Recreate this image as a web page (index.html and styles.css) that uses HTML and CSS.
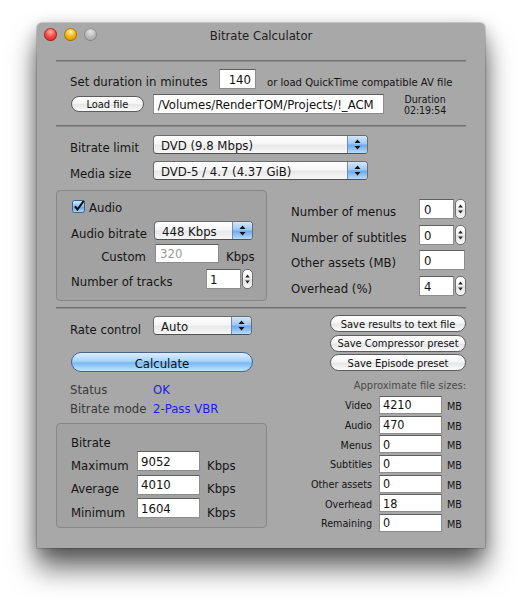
FILE: index.html
```html
<!DOCTYPE html>
<html>
<head>
<meta charset="utf-8">
<title>Bitrate Calculator</title>
<link rel="stylesheet" href="styles.css">
</head>
<body>
<div class="window">
  <div class="titlebar">
    <div class="lights"><span class="light red"></span><span class="light yellow"></span><span class="light gray"></span></div>
    <div class="title">Bitrate Calculator</div>
    <div></div>
  </div>
  <div class="content">
    <div class="sep sep1"></div>

    <div class="row r-dur">
      <span class="lbl lbl-dur">Set duration in minutes</span>
      <span class="field f-dur">140</span>
      <span class="small note">or load QuickTime compatible AV file</span>
    </div>
    <div class="row r-load">
      <span class="btn b-load">Load file</span>
      <span class="field f-path">/Volumes/RenderTOM/Projects/!_ACM</span>
      <span class="duration"><span class="small dline">Duration</span><span class="small dline">02:19:54</span></span>
    </div>

    <div class="sep sep2"></div>

    <div class="row r-limit">
      <span class="lbl lbl-col">Bitrate limit</span>
      <span class="popup p-wide"><span class="ptext">DVD (9.8 Mbps)</span><span class="parrows"><svg width="7" height="11" viewBox="0 0 7 11"><path d="M3.5 0.5 L6.5 4 H0.5Z M3.5 10.5 L6.5 7 H0.5Z"/></svg></span></span>
    </div>
    <div class="row r-media">
      <span class="lbl lbl-col">Media size</span>
      <span class="popup p-wide"><span class="ptext">DVD-5 / 4.7 (4.37 GiB)</span><span class="parrows"><svg width="7" height="11" viewBox="0 0 7 11"><path d="M3.5 0.5 L6.5 4 H0.5Z M3.5 10.5 L6.5 7 H0.5Z"/></svg></span></span>
    </div>

    <div class="middle">
      <div class="group audio">
        <div class="row a-check">
          <svg class="check" width="13" height="13" viewBox="0 0 13 13">
            <defs>
              <linearGradient id="cb" x1="0" y1="0" x2="0" y2="1">
                <stop offset="0" stop-color="#d5e9fb"/>
                <stop offset="0.5" stop-color="#8fc0f0"/>
                <stop offset="0.5" stop-color="#5f9fe6"/>
                <stop offset="1" stop-color="#b4dcfc"/>
              </linearGradient>
            </defs>
            <rect x="0.5" y="0.5" width="12" height="12" rx="2" fill="url(#cb)" stroke="#3d5f88"/>
            <path d="M3 6.2 L5.4 9.6 L11.8 0.8" fill="none" stroke="#111" stroke-width="2"/>
          </svg>
          <span class="lbl">Audio</span>
        </div>
        <div class="row a-bitrate">
          <span class="lbl lbl-col2">Audio bitrate</span>
          <span class="popup p-narrow"><span class="ptext">448 Kbps</span><span class="parrows"><svg width="7" height="11" viewBox="0 0 7 11"><path d="M3.5 0.5 L6.5 4 H0.5Z M3.5 10.5 L6.5 7 H0.5Z"/></svg></span></span>
        </div>
        <div class="row a-custom">
          <span class="lbl lbl-custom">Custom</span>
          <span class="field f-custom">320</span>
          <span class="lbl unit-kbps">Kbps</span>
        </div>
        <div class="row a-tracks">
          <span class="lbl lbl-tracks">Number of tracks</span>
          <span class="field f-step">1</span>
          <span class="stepper"><svg width="7" height="14" viewBox="0 0 7 14"><path d="M3.5 2.5 L5.8 5.5 H1.2Z M3.5 11.5 L5.8 8.5 H1.2Z"/></svg></span>
        </div>
      </div>

      <div class="assets">
        <div class="row s-row s1">
          <span class="lbl lbl-asset">Number of menus</span>
          <span class="field f-step">0</span>
          <span class="stepper"><svg width="7" height="14" viewBox="0 0 7 14"><path d="M3.5 2.5 L5.8 5.5 H1.2Z M3.5 11.5 L5.8 8.5 H1.2Z"/></svg></span>
        </div>
        <div class="row s-row s2">
          <span class="lbl lbl-asset">Number of subtitles</span>
          <span class="field f-step">0</span>
          <span class="stepper"><svg width="7" height="14" viewBox="0 0 7 14"><path d="M3.5 2.5 L5.8 5.5 H1.2Z M3.5 11.5 L5.8 8.5 H1.2Z"/></svg></span>
        </div>
        <div class="row s-row s3">
          <span class="lbl lbl-asset">Other assets (MB)</span>
          <span class="field f-other">0</span>
        </div>
        <div class="row s-row s4">
          <span class="lbl lbl-asset">Overhead (%)</span>
          <span class="field f-step">4</span>
          <span class="stepper"><svg width="7" height="14" viewBox="0 0 7 14"><path d="M3.5 2.5 L5.8 5.5 H1.2Z M3.5 11.5 L5.8 8.5 H1.2Z"/></svg></span>
        </div>
      </div>
    </div>

    <div class="sep sep3"></div>

    <div class="bottom">
      <div class="leftcol">
        <div class="row r-rate">
          <span class="lbl lbl-col">Rate control</span>
          <span class="popup p-narrow"><span class="ptext">Auto</span><span class="parrows"><svg width="7" height="11" viewBox="0 0 7 11"><path d="M3.5 0.5 L6.5 4 H0.5Z M3.5 10.5 L6.5 7 H0.5Z"/></svg></span></span>
        </div>
        <div class="calc">Calculate</div>
        <div class="row r-status st1">
          <span class="lbl lbl-col dim">Status</span>
          <span class="val">OK</span>
        </div>
        <div class="row r-status st2">
          <span class="lbl lbl-col dim">Bitrate mode</span>
          <span class="val">2-Pass VBR</span>
        </div>
        <div class="group bitrate">
          <div class="row b-title"><span class="lbl">Bitrate</span></div>
          <div class="row b-row b1"><span class="lbl lbl-b">Maximum</span><span class="field f-b">9052</span><span class="lbl unit-b">Kbps</span></div>
          <div class="row b-row b2"><span class="lbl lbl-b">Average</span><span class="field f-b">4010</span><span class="lbl unit-b">Kbps</span></div>
          <div class="row b-row b3"><span class="lbl lbl-b">Minimum</span><span class="field f-b">1604</span><span class="lbl unit-b">Kbps</span></div>
        </div>
      </div>

      <div class="rightcol">
        <div class="btns">
          <span class="btn b-save">Save results to text file</span>
          <span class="btn b-save">Save Compressor preset</span>
          <span class="btn b-save">Save Episode preset</span>
        </div>
        <div class="small approx">Approximate file sizes:</div>
        <div class="sizes">
          <span class="small slbl">Video</span><span class="field f-size">4210</span><span class="small mb">MB</span>
          <span class="small slbl">Audio</span><span class="field f-size">470</span><span class="small mb">MB</span>
          <span class="small slbl">Menus</span><span class="field f-size">0</span><span class="small mb">MB</span>
          <span class="small slbl">Subtitles</span><span class="field f-size">0</span><span class="small mb">MB</span>
          <span class="small slbl">Other assets</span><span class="field f-size">0</span><span class="small mb">MB</span>
          <span class="small slbl">Overhead</span><span class="field f-size">18</span><span class="small mb">MB</span>
          <span class="small slbl">Remaining</span><span class="field f-size">0</span><span class="small mb">MB</span>
        </div>
      </div>
    </div>
  </div>
</div>
</body>
</html>
```

FILE: styles.css
```css
* { box-sizing: border-box; }

html, body {
  margin: 0;
  padding: 0;
  background: #ffffff;
}

body {
  min-height: 600px;
  padding: 23px 0 0 37px;
  font-family: "DejaVu Sans Condensed", "DejaVu Sans", sans-serif;
  font-size: 13px;
  color: #151515;
}

.window {
  width: 448px;
  height: 525px;
  background: #a8a8a8;
  border-radius: 5px 5px 1px 1px;
  box-shadow: 0 20px 28px rgba(0, 0, 0, 0.6), 0 4px 16px rgba(0, 0, 0, 0.25), 0 0 0 1px rgba(0, 0, 0, 0.14);
}

/* ---------- title bar ---------- */
.titlebar {
  height: 22px;
  padding: 0 7px;
  display: grid;
  grid-template-columns: 1fr auto 1fr;
  align-items: center;
}

.lights {
  display: flex;
  gap: 7px;
}

.light {
  width: 13px;
  height: 13px;
  border-radius: 50%;
}

.red {
  background: radial-gradient(circle at 50% 30%, #ffb5ae 0, #f24b42 45%, #c0211b 100%);
  box-shadow: inset 0 0 0 1px rgba(110, 20, 15, 0.55);
}

.yellow {
  background: radial-gradient(circle at 50% 30%, #fff0a8 0, #f5b417 45%, #c67d00 100%);
  box-shadow: inset 0 0 0 1px rgba(120, 75, 0, 0.55);
}

.gray {
  background: radial-gradient(circle at 50% 30%, #e6e6e6 0, #bcbcbc 45%, #989898 100%);
  box-shadow: inset 0 0 0 1px rgba(80, 80, 80, 0.4);
}

.title {
  color: #1e1e1e;
  font-size: 13px;
  padding-top: 2px;
}

/* ---------- content ---------- */
.content {
  padding: 0 19px;
}

.sep {
  height: 2px;
  border-top: 1px solid #727272;
  border-bottom: 1px solid #8c8c8c;
}

.sep1 { margin-top: 15px; }
.sep2 { margin-top: 11px; }
.sep3 { margin-top: 6px; }

.row {
  display: flex;
  align-items: center;
}

.lbl {
  white-space: nowrap;
  padding-top: 5px;
}

.small {
  font-size: 11.2px;
  white-space: nowrap;
}

/* fields */
.field {
  display: flex;
  align-items: center;
  background: #fff;
  border: 1px solid #8c8c8c;
  border-top-color: #5e5e5e;
  height: 19px;
  padding: 0 3px;
  font-size: 13px;
  color: #111;
  white-space: nowrap;
  overflow: hidden;
}

/* popup buttons */
.popup {
  display: flex;
  align-items: center;
  height: 19px;
  border: 1px solid #6c6c6c;
  border-bottom-color: #505050;
  border-radius: 4px;
  background: linear-gradient(#ffffff 0, #f6f6f6 45%, #e9e9e9 55%, #f7f7f7 100%);
  overflow: hidden;
}

.ptext {
  flex: 1;
  padding: 2px 0 0 7px;
  white-space: nowrap;
}

.parrows {
  width: 20px;
  height: 100%;
  display: flex;
  align-items: center;
  justify-content: center;
  border-left: 1px solid #6d8db5;
  background: linear-gradient(#d4e8fb 0, #9fc8f2 45%, #6eaaea 55%, #b9dcfb 100%);
}

.parrows svg { fill: #111; }

.p-wide { width: 215px; }
.p-narrow { width: 99px; }

/* stepper */
.stepper {
  width: 11px;
  height: 20px;
  margin-left: 1px;
  border: 1px solid #6f6f6f;
  border-radius: 5px;
  background: linear-gradient(#ffffff 0, #f2f2f2 48%, #e1e1e1 52%, #f8f8f8 100%);
  display: flex;
  align-items: center;
  justify-content: center;
}

.stepper svg { fill: #222; }

/* aqua buttons */
.btn {
  display: flex;
  align-items: center;
  justify-content: center;
  height: 16px;
  border: 1px solid #5c5c5c;
  border-radius: 9px;
  background: linear-gradient(#ffffff 0, #f6f6f6 45%, #e6e6e6 55%, #fbfbfb 100%);
  font-size: 11px;
  color: #111;
  white-space: nowrap;
  padding-top: 1px;
}

/* ---------- file rows ---------- */
.r-dur {
  margin-top: 7px;
  height: 20px;
  padding-left: 14px;
}

.lbl-dur { width: 149px; }

.f-dur {
  width: 37px;
  height: 20px;
  justify-content: flex-end;
  padding-right: 4px;
}

.note {
  margin-left: 11px;
  padding-top: 6px;
}

.r-load {
  margin-top: 5px;
  height: 20px;
  padding-left: 15px;
}

.b-load {
  width: 73px;
  height: 16px;
  margin-right: 9px;
}

.f-path {
  width: 232px;
  height: 20px;
  padding-left: 4px;
}

.duration {
  width: 82px;
  display: flex;
  flex-direction: column;
  align-items: center;
  padding-top: 1px;
}

.dline {
  font-size: 10.5px;
  line-height: 11px;
  height: 11px;
}

/* ---------- limit rows ---------- */
.r-limit {
  margin-top: 8px;
  height: 19px;
  padding-left: 14px;
}

.r-media {
  margin-top: 7px;
  height: 19px;
  padding-left: 14px;
}

.lbl-col { width: 83px; }

/* ---------- middle ---------- */
.middle {
  margin-top: 10px;
  display: flex;
}

.group {
  border: 1px solid #878787;
  border-radius: 4px;
  background: rgba(0, 0, 0, 0.035);
}

.audio {
  width: 211px;
  height: 111px;
  padding: 8px 0 0 14px;
}

.a-check {
  height: 14px;
  gap: 4px;
  padding-left: 1px;
}

.a-check .lbl { padding-top: 2px; }

.a-bitrate {
  margin-top: 8px;
  height: 19px;
}

.lbl-col2 { width: 83px; }

.a-custom {
  margin-top: 4px;
  height: 19px;
}

.lbl-custom {
  width: 84px;
  text-align: right;
  padding-right: 9px;
}

.f-custom {
  width: 64px;
  color: #9a9a9a;
  padding-left: 4px;
}

.unit-kbps { margin-left: 7px; }

.a-tracks {
  margin-top: 6px;
  height: 20px;
}

.lbl-tracks { width: 135px; }

.f-step {
  width: 35px;
  height: 20px;
  padding-left: 4px;
}

.a-tracks .f-step { width: 35px; padding-left: 3px; }

.assets {
  flex: 1;
  padding: 9px 0 0 24px;
}

.s-row { height: 20px; }
.s2 { margin-top: 6px; }
.s3 { margin-top: 5px; }
.s4 { margin-top: 6px; }

.lbl-asset { width: 128px; }

.f-other {
  width: 46px;
  height: 20px;
  padding-left: 4px;
}

/* ---------- bottom ---------- */
.bottom {
  display: flex;
}

.leftcol {
  width: 211px;
}

.r-rate {
  margin-top: 7px;
  height: 19px;
  padding-left: 14px;
}

.r-rate .lbl { padding-top: 7px; }

.calc {
  margin: 17px 0 0 15px;
  width: 182px;
  height: 20px;
  border: 1px solid #46658e;
  border-radius: 10px;
  background: linear-gradient(#dcefff 0, #a9d3f8 45%, #78b8f2 55%, #c2e5fd 100%);
  display: flex;
  align-items: center;
  justify-content: center;
  color: #111;
  padding-top: 2px;
}

.r-status {
  height: 19px;
  padding-left: 14px;
}

.st1 { margin-top: 6px; }

.dim { color: #383838; }

.r-status .lbl { padding-top: 4px; }

.val {
  color: #1b1bf0;
  padding-top: 4px;
}

.bitrate {
  margin-top: 7px;
  height: 105px;
  padding: 10px 0 0 14px;
}

.b-title { height: 17px; }
.b-title .lbl { padding-top: 0; }

.b-row { height: 20px; }
.b2, .b3 { margin-top: 3.5px; }

.b-row .lbl { padding-top: 8px; }

.lbl-b { width: 66px; }

.f-b {
  width: 63px;
  height: 20px;
}

.unit-b { margin-left: 7px; }

.rightcol {
  flex: 1;
  display: flex;
  flex-direction: column;
  align-items: flex-end;
}

.btns {
  margin-top: 6px;
  display: flex;
  flex-direction: column;
  gap: 2.5px;
}

.b-save {
  width: 136px;
  height: 17px;
}

.approx {
  margin-top: 6px;
  height: 18px;
  line-height: 18px;
  color: #4a4a4a;
  font-size: 11px;
}

.sizes {
  width: 100%;
  display: grid;
  grid-template-columns: 1fr 63px 24px;
  grid-auto-rows: 19.7px;
  align-items: center;
}

.slbl {
  text-align: right;
  padding: 2px 7px 0 0;
  font-size: 10.7px;
}

.f-size {
  height: 18px;
  font-size: 12.5px;
}

.mb {
  padding: 3px 0 0 5px;
  font-size: 10.7px;
}
```
